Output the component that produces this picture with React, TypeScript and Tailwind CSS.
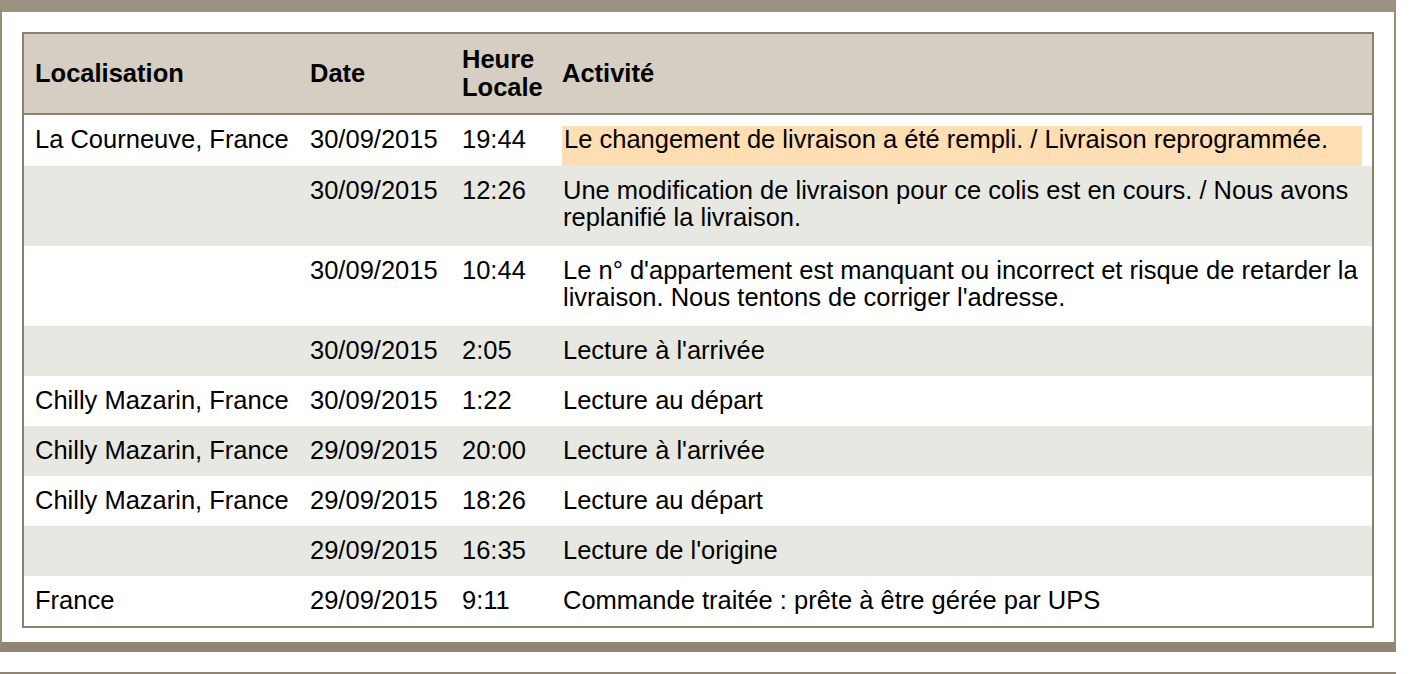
import React from "react";

type Row = {
  loc: string;
  date: string;
  time: string;
  act: string;
  double?: boolean;
  highlight?: boolean;
};

const rows: Row[] = [
  { loc: "La Courneuve, France", date: "30/09/2015", time: "19:44", act: "Le changement de livraison a été rempli. / Livraison reprogrammée.", highlight: true },
  { loc: "", date: "30/09/2015", time: "12:26", act: "Une modification de livraison pour ce colis est en cours. / Nous avons replanifié la livraison.", double: true },
  { loc: "", date: "30/09/2015", time: "10:44", act: "Le n° d'appartement est manquant ou incorrect et risque de retarder la livraison. Nous tentons de corriger l'adresse.", double: true },
  { loc: "", date: "30/09/2015", time: "2:05", act: "Lecture à l'arrivée" },
  { loc: "Chilly Mazarin, France", date: "30/09/2015", time: "1:22", act: "Lecture au départ" },
  { loc: "Chilly Mazarin, France", date: "29/09/2015", time: "20:00", act: "Lecture à l'arrivée" },
  { loc: "Chilly Mazarin, France", date: "29/09/2015", time: "18:26", act: "Lecture au départ" },
  { loc: "", date: "29/09/2015", time: "16:35", act: "Lecture de l'origine" },
  { loc: "France", date: "29/09/2015", time: "9:11", act: "Commande traitée : prête à être gérée par UPS" },
];

export default function App() {
  return (
    <div
      className="w-[1414px] h-[674px] bg-white text-black overflow-hidden"
      style={{ fontFamily: '"Liberation Sans", Arial, Helvetica, sans-serif' }}
    >
      <div className="w-[1396px] border-x-2 border-[#988c7b] border-t-[12px] border-t-[#9d9282] border-b-[10px] border-b-[#918573] pt-[20px] px-[20px] pb-[14px]">
        <div className="border-2 border-[#8c8070]">
          <table className="w-[1348px] table-fixed border-collapse text-[25.5px] leading-[27px]">
            <colgroup>
              <col className="w-[275px]" />
              <col className="w-[152px]" />
              <col className="w-[101px]" />
              <col className="w-[820px]" />
            </colgroup>
            <thead>
              <tr className="bg-[#d6cec2] leading-[28px]">
                <th className="text-left font-bold align-middle pl-[11px] pr-[4px] pt-[11px] pb-[12px] border-b-2 border-[#8c8070]">Localisation</th>
                <th className="text-left font-bold align-middle pl-[11px] pr-[4px] pt-[11px] pb-[12px] border-b-2 border-[#8c8070]">Date</th>
                <th className="text-left font-bold align-middle pl-[11px] pr-[4px] pt-[11px] pb-[12px] border-b-2 border-[#8c8070]">
                  Heure
                  <br />
                  Locale
                </th>
                <th className="text-left font-bold align-middle pl-[10px] pr-[10px] pt-[11px] pb-[12px] border-b-2 border-[#8c8070]">Activité</th>
              </tr>
            </thead>
            <tbody>
              {rows.map((r, i) => {
                const bg = i % 2 === 1 ? "bg-[#e8e8e3]" : "bg-white";
                const pb = r.highlight ? "pb-0" : r.double ? "pb-[15px]" : "pb-[12px]";
                return (
                  <tr key={i} className={bg}>
                    <td className={`align-top pl-[11px] pr-[4px] pt-[11px] whitespace-nowrap ${pb}`}>{r.loc}</td>
                    <td className={`align-top pl-[11px] pr-[4px] pt-[11px] whitespace-nowrap ${pb}`}>{r.date}</td>
                    <td className={`align-top pl-[11px] pr-[4px] pt-[11px] whitespace-nowrap ${pb}`}>{r.time}</td>
                    <td className={`align-top pl-[11px] pr-[10px] pt-[11px] ${pb}`}>
                      {r.highlight ? (
                        <div className="bg-[#fedeb2] -ml-[1px] pl-[2px] pb-[13px]">{r.act}</div>
                      ) : (
                        r.act
                      )}
                    </td>
                  </tr>
                );
              })}
            </tbody>
          </table>
        </div>
      </div>
      <div className="w-[1396px] h-[20px]" />
      <div className="w-[1396px] h-[2px] bg-[#918573]" />
    </div>
  );
}
